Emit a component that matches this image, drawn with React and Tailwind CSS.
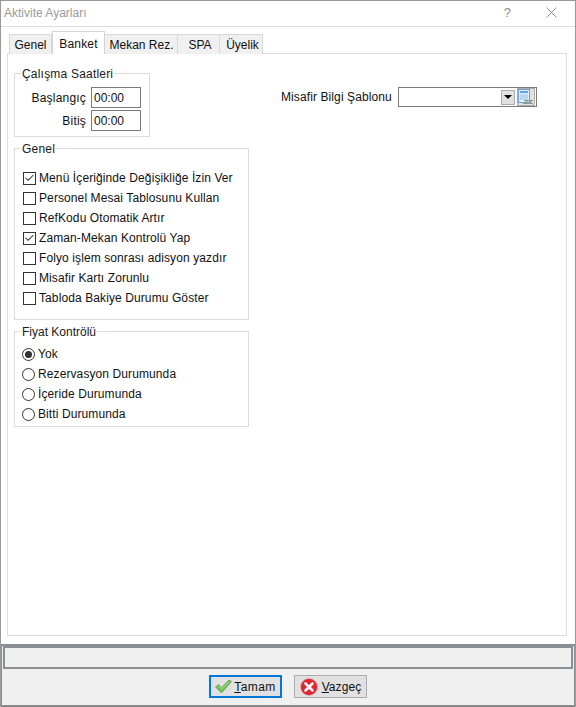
import { Check } from "lucide-react";

const tabs = [
  { label: "Genel", w: "w-[43px]" },
  { label: "Banket", w: "w-[53px]", active: true },
  { label: "Mekan Rez.", w: "w-[73px] pl-[1px]" },
  { label: "SPA", w: "w-[42px] pl-[3px]" },
  { label: "Üyelik", w: "w-[43px] pl-[3px]" },
];

const checks = [
  { label: "Menü İçeriğinde Değişikliğe İzin Ver", on: true },
  { label: "Personel Mesai Tablosunu Kullan" },
  { label: "RefKodu Otomatik Artır" },
  { label: "Zaman-Mekan Kontrolü Yap", on: true },
  { label: "Folyo işlem sonrası adisyon yazdır" },
  { label: "Misafir Kartı Zorunlu" },
  { label: "Tabloda Bakiye Durumu Göster" },
];

const radios = [
  { label: "Yok", on: true },
  { label: "Rezervasyon Durumunda" },
  { label: "İçeride Durumunda" },
  { label: "Bitti Durumunda" },
];

function Group({ title, className, titleClass = "tracking-[0.2px]", children }) {
  return (
    <div className={`relative border border-[#dcdcdc] bg-white ${className}`}>
      <span className={`absolute left-[6px] top-[-7px] bg-white px-[1px] text-[12px] leading-[14px] text-[#1a1a1a] ${titleClass}`}>{title}</span>
      {children}
    </div>
  );
}

function TimeRow({ label, className }) {
  return (
    <div className={`flex items-center justify-end ${className}`}>
      <span className="mr-[5px] text-[12px] leading-[14px] tracking-[0.2px]">{label}</span>
      <div className="mr-[8px] flex h-[21px] w-[50px] items-center border border-[#7a7a7a] pl-[2px] text-[12px]">00:00</div>
    </div>
  );
}

function CheckRow({ label, on }) {
  return (
    <div className="flex h-[20px] items-center">
      <div className="mr-[3px] flex h-[13px] w-[13px] items-center justify-center border border-[#333] bg-white">
        {on && <Check size={12} strokeWidth={2.2} className="text-[#333]" />}
      </div>
      <span className="text-[12px] leading-[14px] tracking-[0.1px] text-[#111]">{label}</span>
    </div>
  );
}

function RadioRow({ label, on }) {
  return (
    <div className="flex h-[20px] items-center">
      <div className="mr-[3px] flex h-[13px] w-[13px] items-center justify-center rounded-full border border-[#333] bg-white">
        {on && <div className="h-[7px] w-[7px] rounded-full bg-[#333]" />}
      </div>
      <span className="text-[12px] leading-[14px] tracking-[0.1px] text-[#111]">{label}</span>
    </div>
  );
}

function TableIcon() {
  return (
    <svg width="16" height="16" viewBox="0 0 16 16">
      <rect x="0.5" y="0.5" width="11" height="13" fill="#e3effb" stroke="#6f9fd2" />
      <rect x="2" y="2" width="8" height="2" fill="#5aa3e6" />
      <path d="M2 6h8M2 8h8M2 10h8" stroke="#8fbde8" />
      <path d="M6 11.5h9M5 14.5h10" stroke="#8a9a8a" strokeWidth="1.2" />
      <circle cx="8.5" cy="13" r="1.2" fill="#8fa58f" />
      <circle cx="12.5" cy="13" r="1.2" fill="#8fa58f" />
    </svg>
  );
}

function OkIcon() {
  return (
    <svg width="17" height="15" viewBox="0 0 17 15">
      <path d="M0.5 8 L3.5 5.5 L6.5 8.5 L14 1 L16.5 2.5 L6.5 14 Z" fill="#6cc04a" stroke="#6f9f78" strokeWidth="0.8" strokeLinejoin="round" />
      <path d="M3.5 7 L6.5 10 L14 3" fill="none" stroke="#b7e39a" strokeWidth="1" />
    </svg>
  );
}

function CancelIcon() {
  return (
    <svg width="18" height="18" viewBox="0 0 18 18">
      <circle cx="9" cy="9" r="8.5" fill="#e5222f" stroke="#c9c9c9" strokeWidth="0.6" />
      <path d="M5.5 5.5 L12.5 12.5 M12.5 5.5 L5.5 12.5" stroke="#fff" strokeWidth="2.6" strokeLinecap="round" />
    </svg>
  );
}

export default function App() {
  return (
    <div className="flex h-[707px] w-[576px] flex-col overflow-hidden border-x border-t border-[#9a9a9a] bg-white font-['Liberation_Sans',Arial,sans-serif] text-[#111]">
      <div className="flex h-[25px] shrink-0 items-center justify-between pb-[2px] pl-[3px] pr-[18px] text-[12px] text-[#9a9a9a]">
        <span>Aktivite Ayarları</span>
        <div className="flex items-center gap-[35px]">
          <span className="text-[13px] text-[#8a8a8a]">?</span>
          <svg width="11" height="11" viewBox="0 0 11 11">
            <path d="M0.5 0.5 L10.5 10.5 M10.5 0.5 L0.5 10.5" stroke="#777" strokeWidth="0.8" fill="none" />
          </svg>
        </div>
      </div>

      <div className="flex min-h-0 flex-1 flex-col border-t border-[#dcdcdc] bg-white pl-[6px] pr-[8px] pt-[6px]">
        <div className="relative z-10 flex h-[21px] shrink-0 items-end pl-[2px]">
          {tabs.map((t) =>
            t.active ? (
              <div key={t.label} className={`${t.w} flex h-[23px] items-start justify-center border border-b-0 border-[#d4d4d4] bg-white pt-[3px] text-[12px] tracking-[0.2px]`}>
                {t.label}
              </div>
            ) : (
              <div key={t.label} className={`${t.w} flex h-[20px] items-center justify-center border border-b-0 border-l-0 first:border-l border-[#d9d9d9] bg-[#f0f0f0] text-[12px]`}>
                {t.label}
              </div>
            )
          )}
        </div>
        <div className="-mt-[1px] flex h-[583px] shrink-0 items-start border border-[#dcdcdc] bg-white pl-[6px] pt-[19px]">
          <div className="w-[235px] shrink-0">
            <Group title="Çalışma Saatleri" className="h-[64px] w-[136px] pt-[13px]">
              <TimeRow label="Başlangıç" />
              <TimeRow label="Bitiş" className="mt-[2px]" />
            </Group>
            <Group title="Genel" className="mt-[11px] h-[172px] pl-[8px] pt-[19px]">
              {checks.map((c) => (
                <CheckRow key={c.label} {...c} />
              ))}
            </Group>
            <Group title="Fiyat Kontrölü" titleClass="tracking-[0px]" className="mt-[11px] h-[96px] pl-[7px] pt-[12px]">
              {radios.map((r) => (
                <RadioRow key={r.label} {...r} />
              ))}
            </Group>
          </div>
          <div className="ml-[32px] mt-[14px] flex items-center">
            <span className="mr-[6px] text-[12px] tracking-[0.1px]">Misafir Bilgi Şablonu</span>
            <div className="flex h-[20px] w-[139px] items-center justify-end border border-[#7a7a7a] pr-[1px]">
              <div className="flex h-[15px] w-[14px] items-center justify-center border border-[#adadad] bg-[#e1e1e1]">
                <div className="h-0 w-0 border-x-[4px] border-t-[4px] border-x-transparent border-t-black" />
              </div>
              <div className="ml-[2px] flex h-[18px] w-[18px] items-center justify-center border border-[#adadad] bg-[#e1e1e1]">
                <TableIcon />
              </div>
            </div>
          </div>
        </div>
      </div>

      <div className="flex h-[63px] shrink-0 flex-col border-x border-t-2 border-[#8a8f96] bg-[#f0f0f0]">
        <div className="mx-[1px] h-[23px] shrink-0 border-2 border-[#8a8f96] bg-[#f0f0f0]" />
        <div className="flex flex-1 items-start justify-center gap-[12px] pt-[6px]">
          <button className="flex h-[23px] w-[73px] items-center justify-center gap-[2px] border-2 border-[#0078d7] bg-[#e1e1e1] text-[12px]">
            <OkIcon />
            <span className="tracking-[0.4px]"><span className="underline">T</span>amam</span>
          </button>
          <button className="flex h-[23px] w-[73px] items-center justify-center gap-[4px] border border-[#adadad] bg-[#e1e1e1] text-[12px]">
            <CancelIcon />
            <span className="tracking-[0.1px]"><span className="underline">V</span>azgeç</span>
          </button>
        </div>
        <div className="h-[2px] shrink-0 bg-[#8a8a8a]" />
      </div>
    </div>
  );
}
